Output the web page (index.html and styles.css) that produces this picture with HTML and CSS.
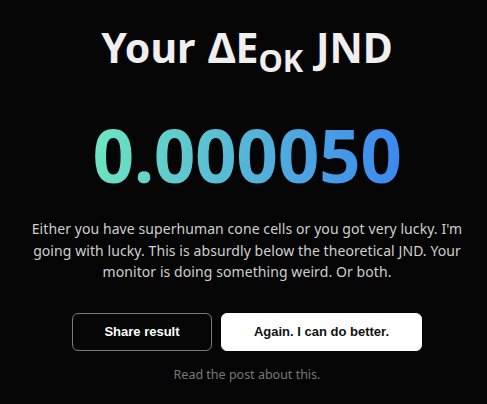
FILE: index.html
```html
<!DOCTYPE html>
<html>
<head>
<meta charset="utf-8">
<link rel="stylesheet" href="styles.css">
</head>
<body>
<main class="result">
  <h1 class="title">Your ΔE<sub class="sub">OK</sub> JND</h1>
  <div class="score">0.000050</div>
  <p class="message">Either you have superhuman cone cells or you got very lucky. I'm going with lucky. This is absurdly below the theoretical JND. Your monitor is doing something weird. Or both.</p>
  <div class="actions">
    <button class="btn btn-outline">Share result</button>
    <button class="btn btn-solid">Again. I can do better.</button>
  </div>
  <a class="post-link" href="#">Read the post about this.</a>
</main>
</body>
</html>
```

FILE: styles.css
```css
html, body {
  margin: 0;
  padding: 0;
  background: #050505;
  height: 100%;
}
.result {
  display: flex;
  flex-direction: column;
  align-items: center;
  padding: 19px 20px 0 27px;
  font-family: "Noto Sans", sans-serif;
  color: #eee;
}
.title {
  margin: 0;
  font-size: 41px;
  font-weight: 700;
  line-height: 56px;
  color: #efefef;
  letter-spacing: 0;
  word-spacing: 2px;
}
.sub {
  font-size: 0.75em;
  vertical-align: -0.3em;
  line-height: 0;
}
.score {
  margin-top: 44px;
  font-size: 73px;
  font-weight: 700;
  line-height: 72px;
  letter-spacing: -0.5px;
  background: linear-gradient(100deg, #6ee7c0 0%, #55b5d8 50%, #3b86f2 100%);
  -webkit-background-clip: text;
  background-clip: text;
  color: transparent;
}
.message {
  margin: 27px 0 0;
  max-width: 440px;
  text-align: center;
  font-size: 14px;
  line-height: 21.5px;
  letter-spacing: 0.08px;
  color: #cfcfcf;
}
.actions {
  display: flex;
  gap: 9px;
  margin-top: 30px;
}
.btn {
  font-family: "Liberation Sans", Arial, sans-serif;
  font-weight: 700;
  font-size: 13px;
  height: 38px;
  border-radius: 6px;
  cursor: pointer;
}
.btn-outline {
  width: 140px;
  background: transparent;
  color: #fff;
  border: 1px solid #7a7a7a;
}
.btn-solid {
  width: 201px;
  background: #fff;
  color: #111;
  border: 1px solid #fff;
}
.post-link {
  margin-top: 15px;
  font-size: 12.5px;
  color: #777;
  text-decoration: none;
}
```
